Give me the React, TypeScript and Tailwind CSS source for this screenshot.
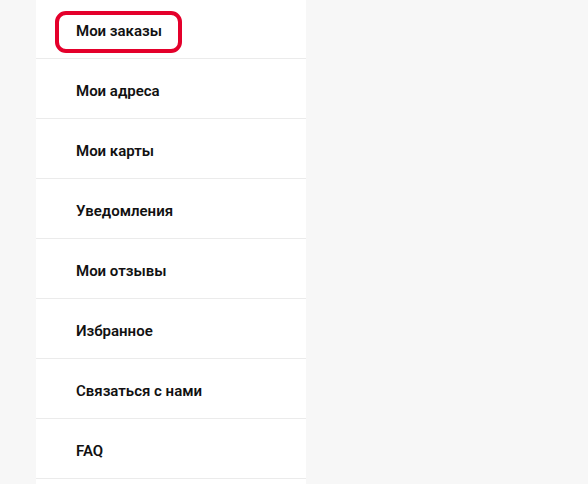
const items = [
  "Мои заказы",
  "Мои адреса",
  "Мои карты",
  "Уведомления",
  "Мои отзывы",
  "Избранное",
  "Связаться с нами",
  "FAQ",
];

export default function App() {
  return (
    <div className="min-h-[484px] bg-[#f7f7f7] font-['Roboto',sans-serif] overflow-hidden">
      <nav className="ml-9 w-[270px] bg-white h-[484px] flex flex-col">
        <ul className="-mt-px">
          {items.map((label, i) => (
            <li
              key={label}
              className="h-[60px] border-b border-[#ebebeb] flex items-center pl-10"
            >
              {i === 0 ? (
                <span className="-ml-[21px] mt-[6px] inline-flex items-center h-[42px] pl-[17px] pr-[16px] border-4 border-[#e4002b] rounded-[11px] text-[15px] font-semibold text-[#111]">
                  {label}
                </span>
              ) : (
                <span className="mt-[5px] text-[15px] font-semibold text-[#111]">{label}</span>
              )}
            </li>
          ))}
        </ul>
      </nav>
    </div>
  );
}
